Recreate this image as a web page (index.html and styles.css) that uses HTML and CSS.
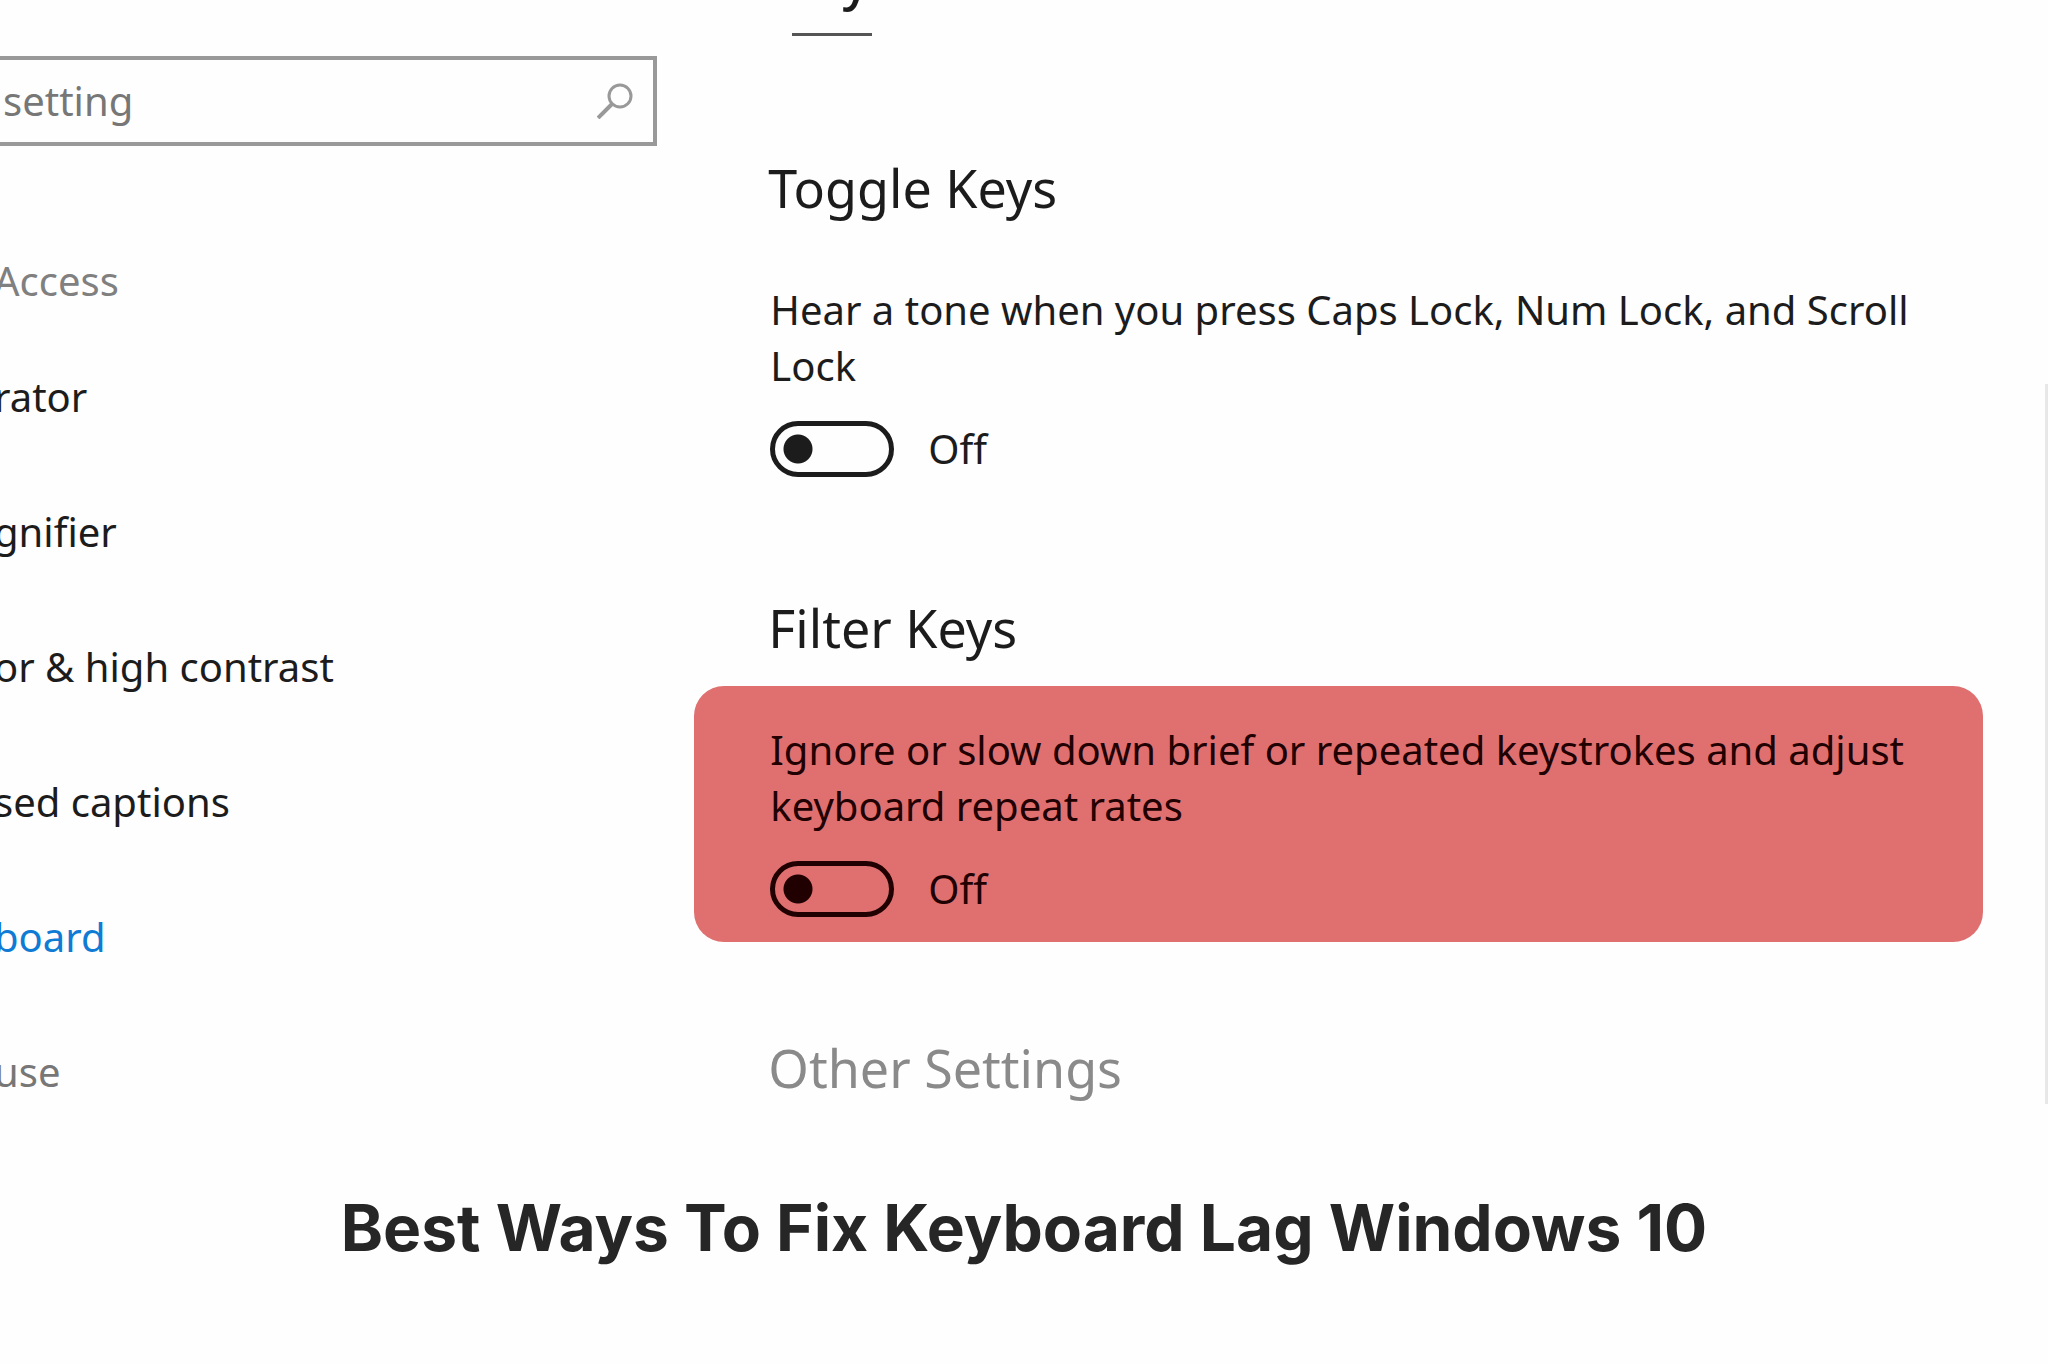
FILE: index.html
```
<!DOCTYPE html>
<html lang="en">

<head>
  <meta charset="utf-8" />
  <title>Best Ways To Fix Keyboard Lag Windows 10</title>
  <link rel="stylesheet" href="styles.css">
</head>

<body>
  <div class="settings">
    <aside class="sidebar">
      <form class="search">
        <input type="text" id="search" placeholder="setting" aria-label="Find a setting" />
        <button type="submit" aria-label="Search">
          <svg viewBox="0 0 36 36" width="36" height="36" fill="none" stroke="#999" stroke-width="3">
            <circle cx="23" cy="13" r="11" />
            <path d="M15 21 L1 35" stroke-width="4" />
          </svg>
        </button>
      </form>

      <h3 class="group">Access</h3>
      <nav class="menu">
        <a href="#">rator</a>
        <a href="#">gnifier</a>
        <a href="#">or &amp; high contrast</a>
        <a href="#">sed captions</a>
        <a href="#" class="active">board</a>
        <a href="#" class="faded">use</a>
      </nav>
    </aside>

    <main class="content">
      <div class="previous">
        <span class="previous-text">y</span>
        <span class="previous-line"></span>
      </div>

      <section class="setting">
        <h2>Toggle Keys</h2>
        <div class="option">
          <p>Hear a tone when you press Caps Lock, Num Lock, and Scroll Lock</p>
          <label class="toggle"><input type="checkbox" role="switch" />Off</label>
        </div>
      </section>

      <section class="setting">
        <h2>Filter Keys</h2>
        <div class="option highlight">
          <p>Ignore or slow down brief or repeated keystrokes and adjust keyboard repeat rates</p>
          <label class="toggle"><input type="checkbox" role="switch" />Off</label>
        </div>
      </section>

      <h2 class="faded">Other Settings</h2>
    </main>

    <div class="scrollbar"></div>
  </div>

  <h1 class="caption">Best Ways To Fix Keyboard Lag Windows 10</h1>
</body>

</html>
```
FILE: styles.css
```
* {
  box-sizing: border-box;
}

body {
  margin: 0;
  font-family: "Noto Sans", "Open Sans", sans-serif;
  font-size: 40px;
  line-height: 56px;
  color: #1c1c1c;
  background: #fefefe;
  overflow-x: hidden;
}

h1,
h2,
h3,
p {
  margin: 0;
  font-weight: 400;
}

.settings {
  display: flex;
}

/* left menu */
.sidebar {
  width: 34%;
  padding-top: 56px;
}

.search {
  display: flex;
  align-items: center;
  margin-right: 39px;
  height: 90px;
  border: 4px solid #999;
  border-left: none;
}

.search input {
  flex: 1;
  min-width: 0;
  padding: 0 0 0 3px;
  border: none;
  outline: none;
  background: none;
  font: inherit;
}

.search input::placeholder {
  color: #777;
  opacity: 1;
}

.search button {
  display: flex;
  padding: 0 20px;
  border: none;
  background: none;
  cursor: pointer;
}

.group,
.menu {
  margin-left: -6px;
}

.group {
  margin-top: 107px;
  font-size: 40px;
  color: #808080;
}

.menu {
  display: flex;
  flex-direction: column;
  gap: 79px;
  margin-top: 60px;
}

.menu a {
  color: inherit;
  text-decoration: none;
}

.menu .active {
  color: #0f7bd4;
}

.menu .faded {
  color: #777;
}

/* right side */
.content {
  flex: 1;
  margin-left: -2px;
  padding-right: 62px;
}

/* end of the section scrolled off the top */
.previous {
  display: flex;
  flex-direction: column;
  height: 36px;
  padding-left: 98px;
  justify-content: flex-end;
  overflow: hidden;
}

.previous-text {
  margin-left: 50px;
  font-size: 52px;
  font-weight: 500;
}

.previous-line {
  flex: none;
  width: 80px;
  height: 3px;
  margin-top: 26px;
  background: #555;
}

h2 {
  margin-bottom: 22px;
  padding-left: 74px;
  font-size: 52px;
  line-height: 72px;
}

.setting {
  margin-bottom: 90px;
}

.previous + .setting {
  margin-top: 116px;
}

.option {
  padding: 36px 72px 25px 76px;
}

.highlight {
  background: #e07070;
  border-radius: 30px;
  color: #200000;
}

.toggle {
  display: flex;
  align-items: center;
  gap: 34px;
  margin-top: 27px;
}

.toggle input {
  appearance: none;
  width: 124px;
  height: 56px;
  margin: 0;
  border: 5px solid currentColor;
  border-radius: 28px;
  color: inherit;
  background: radial-gradient(circle at 23px 50%, currentColor 14px, transparent 15px);
}

.toggle input:checked {
  background: radial-gradient(circle at 90px 50%, currentColor 14px, transparent 15px);
}

.content .faded {
  margin-bottom: 0;
  color: #8a8a8a;
}

.scrollbar {
  width: 3px;
  height: 720px;
  margin-top: 384px;
  background: #e8e8e8;
}

.caption {
  margin-top: 84px;
  font-family: Inter, sans-serif;
  font-size: 64px;
  font-weight: 700;
  line-height: 80px;
  text-align: center;
  color: #262626;
}
```
